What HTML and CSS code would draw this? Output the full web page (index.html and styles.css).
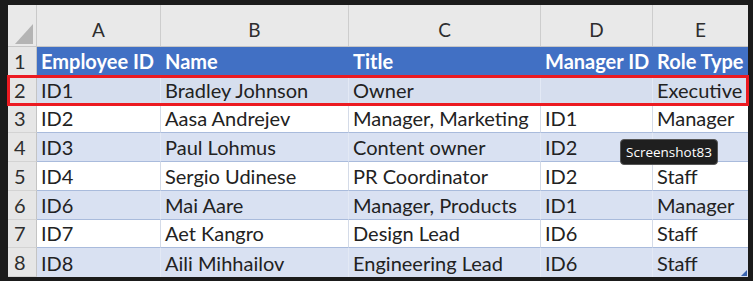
FILE: index.html
```html
<!DOCTYPE html>
<html>
<head>
<meta charset="utf-8">
<link rel="stylesheet" href="styles.css">
</head>
<body>
<div class="frame">
  <div class="sheet">
    <div class="row colhead">
      <div class="corner"><span class="tri"></span></div>
      <div class="ch">A</div>
      <div class="ch">B</div>
      <div class="ch">C</div>
      <div class="ch">D</div>
      <div class="ch last">E</div>
    </div>
    <div class="row head">
      <div class="rh">1</div>
      <div class="c">Employee ID</div>
      <div class="c">Name</div>
      <div class="c">Title</div>
      <div class="c">Manager ID</div>
      <div class="c">Role Type</div>
    </div>
    <div class="row band selected">
      <div class="rh">2</div>
      <div class="c">ID1</div>
      <div class="c">Bradley Johnson</div>
      <div class="c">Owner</div>
      <div class="c"></div>
      <div class="c">Executive</div>
    </div>
    <div class="row plain">
      <div class="rh">3</div>
      <div class="c">ID2</div>
      <div class="c">Aasa Andrejev</div>
      <div class="c">Manager, Marketing</div>
      <div class="c">ID1</div>
      <div class="c">Manager</div>
    </div>
    <div class="row band">
      <div class="rh">4</div>
      <div class="c">ID3</div>
      <div class="c">Paul Lohmus</div>
      <div class="c">Content owner</div>
      <div class="c">ID2</div>
      <div class="c"></div>
    </div>
    <div class="row plain">
      <div class="rh">5</div>
      <div class="c">ID4</div>
      <div class="c">Sergio Udinese</div>
      <div class="c">PR Coordinator</div>
      <div class="c">ID2</div>
      <div class="c">Staff</div>
    </div>
    <div class="row band">
      <div class="rh">6</div>
      <div class="c">ID6</div>
      <div class="c">Mai Aare</div>
      <div class="c">Manager, Products</div>
      <div class="c">ID1</div>
      <div class="c">Manager</div>
    </div>
    <div class="row plain">
      <div class="rh">7</div>
      <div class="c">ID7</div>
      <div class="c">Aet Kangro</div>
      <div class="c">Design Lead</div>
      <div class="c">ID6</div>
      <div class="c">Staff</div>
    </div>
    <div class="row band lastrow">
      <div class="rh">8</div>
      <div class="c">ID8</div>
      <div class="c">Aili Mihhailov</div>
      <div class="c">Engineering Lead</div>
      <div class="c">ID6</div>
      <div class="c handle-cell">Staff<span class="handle"></span></div>
    </div>
    <div class="tooltip">Screenshot83</div>
  </div>
</div>
</body>
</html>
```

FILE: styles.css
```css
html, body {
  margin: 0;
  padding: 0;
  background: #1b1b1b;
  width: 753px;
  height: 281px;
  overflow: hidden;
}

.frame {
  padding: 5px 5px 4px 8px;
}

.sheet {
  position: relative;
  width: 740px;
  background: #ffffff;
  font-family: "Lato", "Open Sans", sans-serif;
  font-size: 20px;
  color: #222222;
}

.row {
  display: grid;
  grid-template-columns: 29px 124px 188px 192px 112px 95px;
  height: 28.75px;
}

.row > div {
  box-sizing: border-box;
  display: flex;
  align-items: center;
  white-space: nowrap;
  overflow: hidden;
}

.colhead {
  height: 42px;
  background: #e9e9e9;
  border-bottom: 1px solid #c6c6c6;
  box-sizing: border-box;
}

.corner {
  position: relative;
  border-right: 1px solid #c9c9c9;
}

.tri {
  display: block;
  width: 0;
  height: 0;
  margin: 17px 0 0 7px;
  border-left: 18px solid transparent;
  border-bottom: 20px solid #b4b4b4;
}

.ch {
  justify-content: center;
  padding-top: 8px;
  border-right: 1px solid #cdcdcd;
  color: #2e2e2e;
  font-size: 19px;
}

.ch.last {
  border-right: none;
}

.rh {
  background: #e6e6e6;
  border-right: 1px solid #c4c4c4;
  border-bottom: 1px solid #d3d3d3;
  padding-left: 6px;
  color: #2e2e2e;
}

.c {
  padding-left: 4px;
  border-bottom: 1px solid #a9bbdc;
}

.head .c {
  background: #4170c4;
  color: #ffffff;
  font-weight: bold;
  border-bottom: 1px solid #4170c4;
}

.band .c {
  background: #d9e1f2;
  border-right: 1px solid #e3e9f5;
}

.plain .c {
  background: #ffffff;
  border-right: 1px solid #d4dbe8;
}

.row .c:last-child {
  border-right: none;
}

.selected {
  position: relative;
  z-index: 2;
  outline: 3px solid #ec1a21;
  outline-offset: -2px;
}

.selected .c {
  background: #d6deee;
}

.lastrow .c {
  border-bottom: none;
}

.handle-cell {
  position: relative;
}

.handle {
  position: absolute;
  right: 1px;
  bottom: 1px;
  width: 0;
  height: 0;
  border-left: 6px solid transparent;
  border-bottom: 6px solid #3a64b0;
}

.tooltip {
  position: absolute;
  left: 612px;
  top: 134px;
  width: 98px;
  height: 26px;
  box-sizing: border-box;
  background: #1f1f1f;
  border: 1px solid #555555;
  border-radius: 4px;
  color: #ffffff;
  font-family: "Open Sans", "Lato", sans-serif;
  font-size: 13.5px;
  display: flex;
  align-items: center;
  justify-content: center;
  z-index: 5;
}
```
